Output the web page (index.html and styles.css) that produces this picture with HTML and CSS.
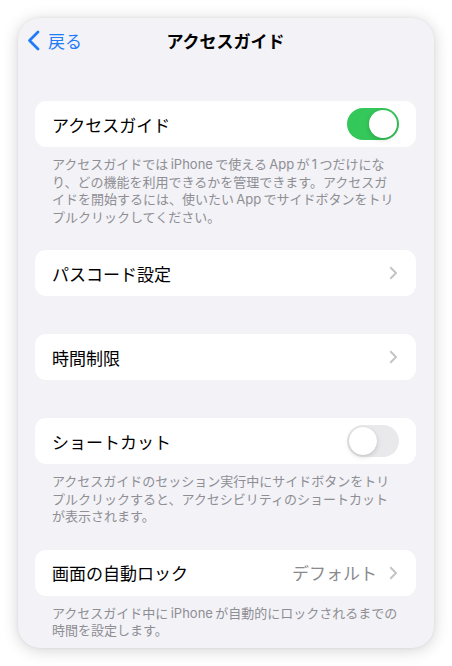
FILE: index.html
```html
<!DOCTYPE html>
<html lang="ja">
<head>
<meta charset="utf-8">
<link rel="stylesheet" href="styles.css">
</head>
<body>
<div class="stage">
  <div class="frame">
    <header class="nav">
      <a class="back">
        <svg class="back-chevron" width="13" height="21" viewBox="0 0 13 21"><path d="M11 2 L2.5 10.5 L11 19" fill="none" stroke="#1f7bf6" stroke-width="2.8" stroke-linecap="round" stroke-linejoin="round"/></svg>
        <span>戻る</span>
      </a>
      <h1 class="title">アクセスガイド</h1>
    </header>

    <section class="group">
      <div class="cell">
        <span class="label">アクセスガイド</span>
        <span class="switch on"><span class="knob"></span></span>
      </div>
      <p class="footer">アクセスガイドでは&#8201;iPhone&#8201;で使える&#8201;App&#8201;が&#8201;1&#8201;つだけにな<br>り、どの機能を利用できるかを管理できます。アクセスガ<br>イドを開始するには、使いたい&#8201;App&#8201;でサイドボタンをトリ<br>プルクリックしてください。</p>
    </section>

    <section class="group">
      <div class="cell">
        <span class="label">パスコード設定</span>
        <svg class="chevron" width="9" height="14" viewBox="0 0 9 14"><path d="M1.8 1.8 L7 7 L1.8 12.2" fill="none" stroke="#c4c4c7" stroke-width="2" stroke-linecap="round" stroke-linejoin="round"/></svg>
      </div>
    </section>

    <section class="group">
      <div class="cell">
        <span class="label">時間制限</span>
        <svg class="chevron" width="9" height="14" viewBox="0 0 9 14"><path d="M1.8 1.8 L7 7 L1.8 12.2" fill="none" stroke="#c4c4c7" stroke-width="2" stroke-linecap="round" stroke-linejoin="round"/></svg>
      </div>
    </section>

    <section class="group">
      <div class="cell">
        <span class="label">ショートカット</span>
        <span class="switch"><span class="knob"></span></span>
      </div>
      <p class="footer">アクセスガイドのセッション実行中にサイドボタンをトリ<br>プルクリックすると、アクセシビリティのショートカット<br>が表示されます。</p>
    </section>

    <section class="group">
      <div class="cell">
        <span class="label">画面の自動ロック</span>
        <span class="value">デフォルト</span>
        <svg class="chevron" width="9" height="14" viewBox="0 0 9 14"><path d="M1.8 1.8 L7 7 L1.8 12.2" fill="none" stroke="#c4c4c7" stroke-width="2" stroke-linecap="round" stroke-linejoin="round"/></svg>
      </div>
      <p class="footer">アクセスガイド中に&#8201;iPhone&#8201;が自動的にロックされるまでの<br>時間を設定します。</p>
    </section>
  </div>
</div>
</body>
</html>
```

FILE: styles.css
```css
* { box-sizing: border-box; }

html, body {
  margin: 0;
  padding: 0;
  background: #ffffff;
}

body {
  font-family: "Inter", "Noto Sans CJK JP", sans-serif;
  color: #000;
}

.stage {
  width: 452px;
  height: 666px;
  padding: 18px 18px 0 18px;
}

.frame {
  width: 416px;
  height: 630px;
  background: #f2f2f7;
  border-radius: 22px;
  box-shadow: 0 2px 16px rgba(0, 0, 0, 0.18), 0 0 3px rgba(0, 0, 0, 0.06);
  overflow: hidden;
  padding: 0 18px 0 17px;
}

.nav {
  height: 44px;
  display: flex;
  align-items: center;
  justify-content: center;
  position: relative;
  margin-bottom: 39px;
}

.back {
  position: absolute;
  left: -8px;
  top: 0;
  height: 44px;
  display: flex;
  align-items: center;
  gap: 8px;
  color: #1f7bf6;
  font-size: 17px;
}

.back-chevron {
  display: block;
}

.title {
  margin: 0;
  font-size: 17px;
  font-weight: 600;
  letter-spacing: 0;
}

.group {
  margin-bottom: 38px;
}

.group:has(.footer) {
  margin-bottom: 24px;
}

.cell {
  height: 46px;
  background: #ffffff;
  border-radius: 11px;
  display: flex;
  align-items: center;
  padding: 0 17px 0 17px;
  font-size: 17px;
}

.label {
  flex: 1;
}

.value {
  color: #8a8a8e;
  margin-right: 12px;
}

.chevron {
  display: block;
  margin-right: 1px;
}

.switch {
  width: 52px;
  height: 32px;
  border-radius: 16px;
  background: #e9e9eb;
  position: relative;
  flex: none;
}

.switch.on {
  background: #34c759;
}

.knob {
  position: absolute;
  top: 2px;
  left: 2px;
  width: 28px;
  height: 28px;
  border-radius: 50%;
  background: #ffffff;
  box-shadow: 0 2px 5px rgba(0, 0, 0, 0.15), 0 0 1px rgba(0, 0, 0, 0.12);
}

.switch.on .knob {
  left: 22px;
}

.footer {
  margin: 0;
  padding: 9px 17px 0 17px;
  font-size: 13px;
  line-height: 17.5px;
  color: #8e8e93;
}
```
